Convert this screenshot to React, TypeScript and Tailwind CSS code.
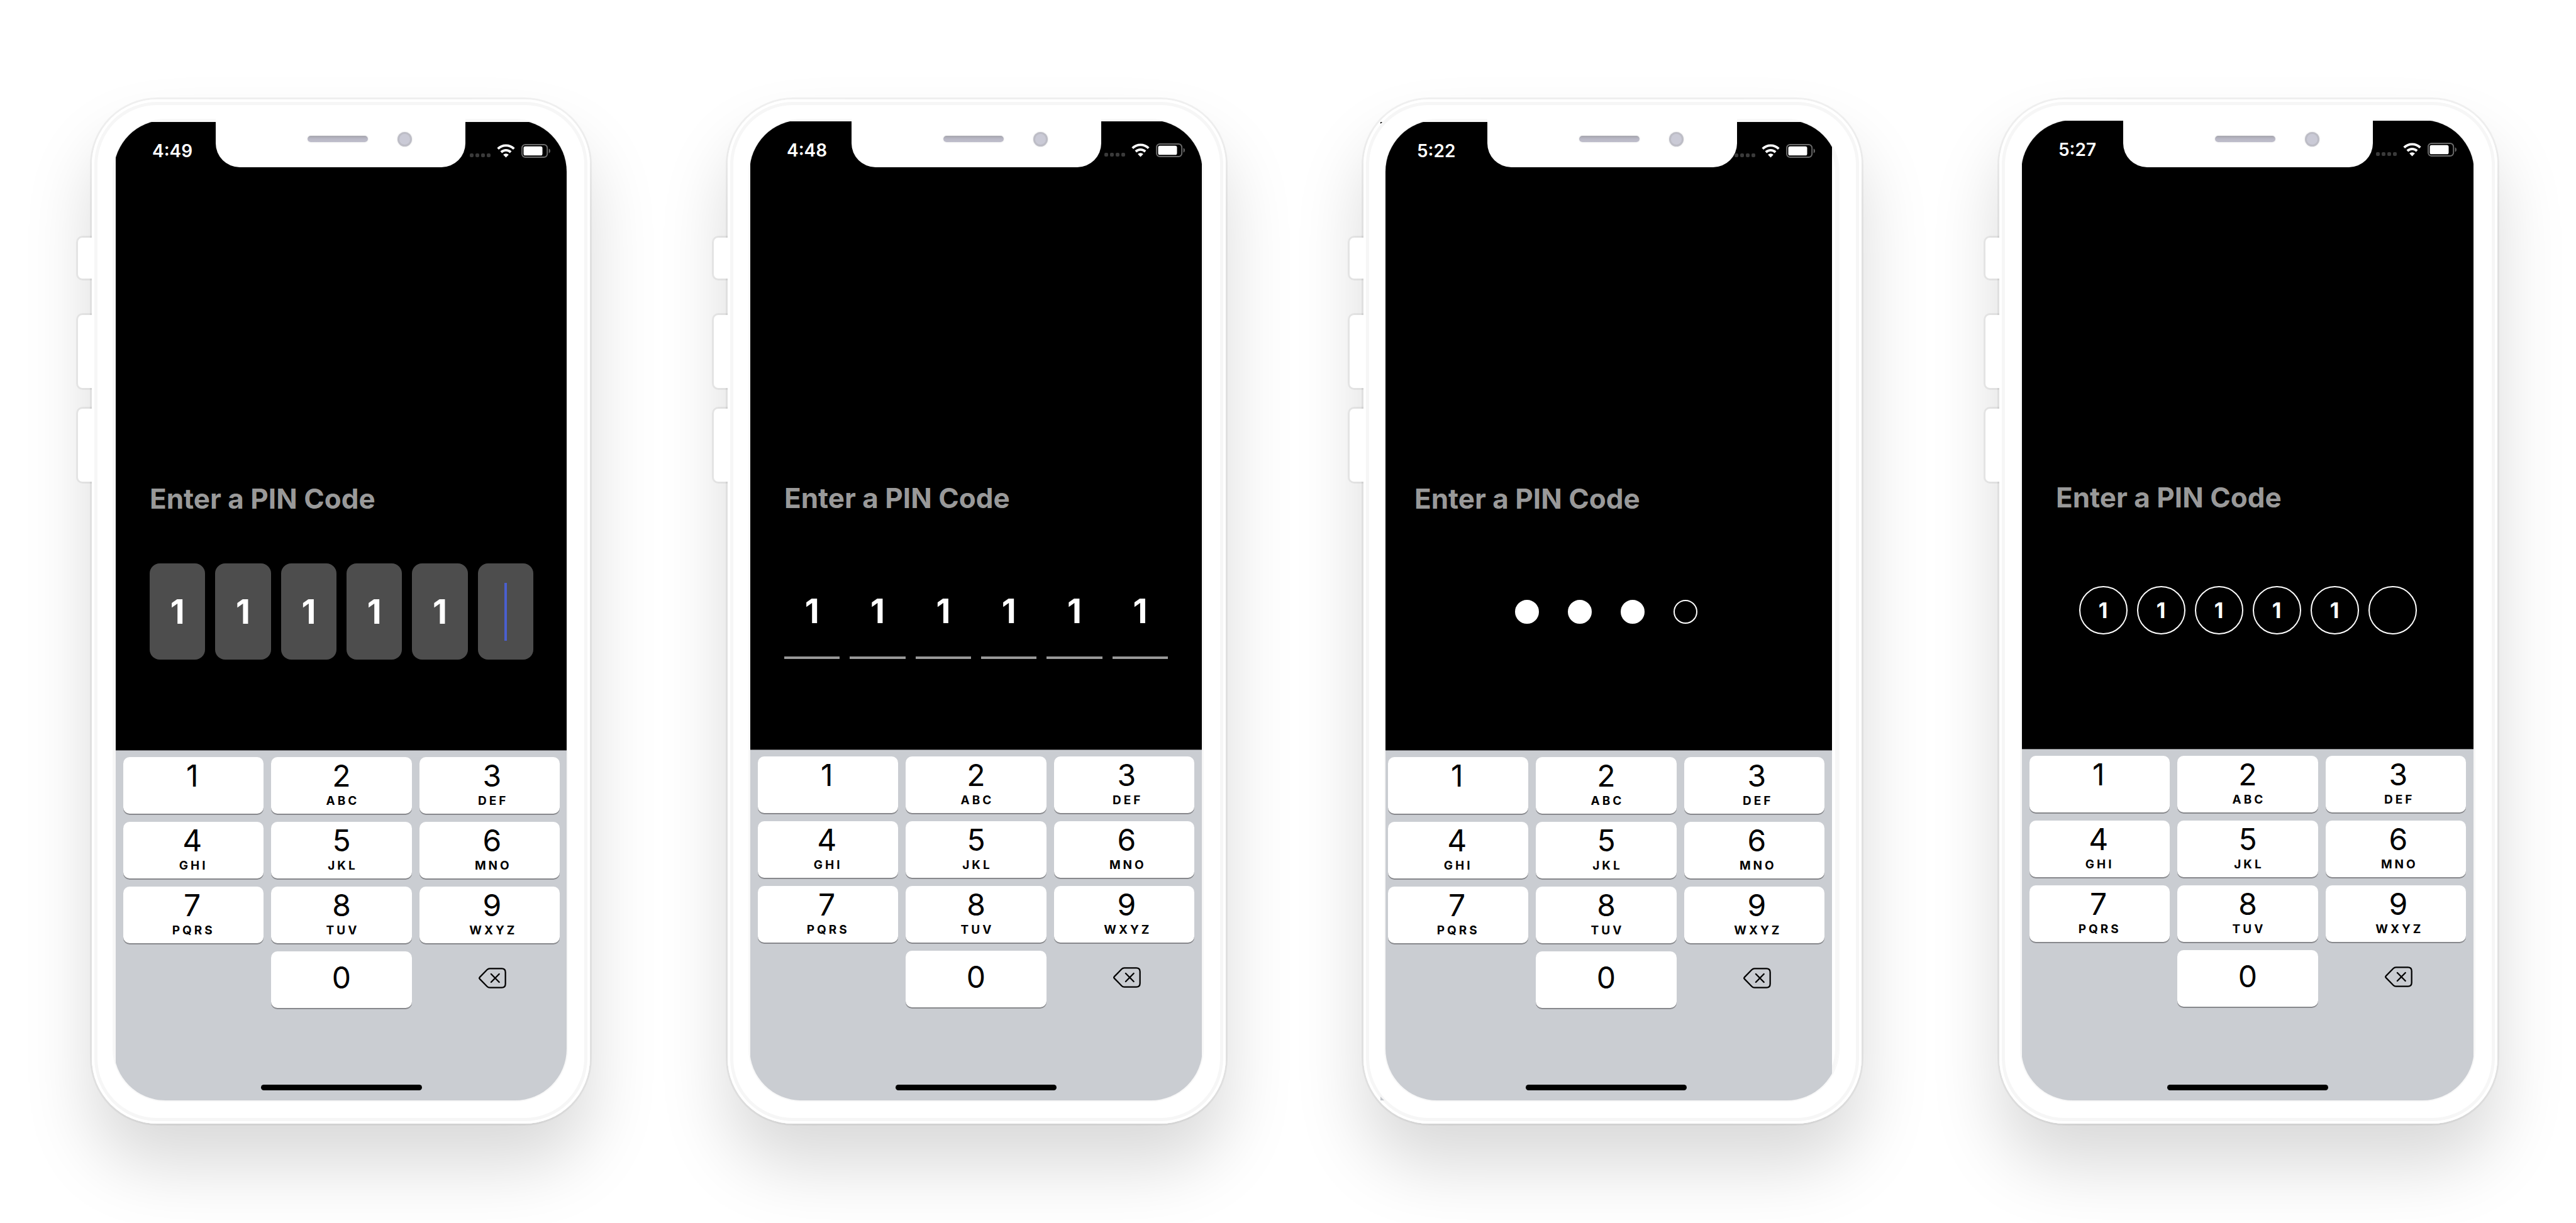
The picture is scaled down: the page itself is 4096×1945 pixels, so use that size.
import React from "react";
import clsx from "clsx";

type Variant = "boxes" | "lines" | "dots" | "circles";

interface PhoneSpec {
  time: string;
  variant: Variant;
  pin: string;
  length: number;
  screen: string;
}

const phones: PhoneSpec[] = [
  { time: "4:49", variant: "boxes", pin: "11111", length: 6, screen: "mt-[3px] ml-[3px] -mr-px" },
  { time: "4:48", variant: "lines", pin: "111111", length: 6, screen: "mt-[2px] mx-px" },
  { time: "5:22", variant: "dots", pin: "111", length: 4, screen: "mt-[3px] -ml-2 mr-[10px]" },
  { time: "5:27", variant: "circles", pin: "11111", length: 6, screen: "mt-px mx-px" },
];

const keys: [string, string][] = [
  ["1", ""],
  ["2", "ABC"],
  ["3", "DEF"],
  ["4", "GHI"],
  ["5", "JKL"],
  ["6", "MNO"],
  ["7", "PQRS"],
  ["8", "TUV"],
  ["9", "WXYZ"],
];

// Outer columns lean slightly towards the edges of the keypad.
const columnPadding = ["pr-1", "", "pl-2"];

function WifiIcon() {
  return (
    <svg viewBox="0 0 30 23" className="h-[22px] w-[29px]" aria-label="Wi-Fi">
      <g fill="none" stroke="#fff" strokeWidth="4">
        <path d="M1.6 8A19.2 19.2 0 0 1 28.4 8" />
        <path d="M7 13.6A11.6 11.6 0 0 1 23 13.6" />
      </g>
      <path d="M15 22.6l-4.6-4.7a6.6 6.6 0 0 1 9.2 0z" fill="#fff" />
    </svg>
  );
}

function BatteryIcon() {
  return (
    <svg viewBox="0 0 48 23" className="h-[22px] w-[46px]" aria-label="Battery">
      <rect x="1" y="1" width="42" height="21" rx="5.5" fill="none" stroke="#6b6b6b" strokeWidth="2" />
      <rect x="3.6" y="3.8" width="31.4" height="15.4" rx="3" fill="#fff" />
      <path d="M45.6 7.6c1.6.7 2.4 2.2 2.4 3.9s-.8 3.2-2.4 3.9z" fill="#6b6b6b" />
    </svg>
  );
}

function BackspaceIcon() {
  return (
    <svg viewBox="0 0 46 34" className="h-[33px] w-[44px]" fill="none" stroke="#000" strokeWidth="2.4" strokeLinejoin="round" strokeLinecap="round">
      <path d="M1.9 15.6L14 3.2Q16 1.2 18.6 1.2H38.5Q44.6 1.2 44.6 7.3V26.7Q44.6 32.8 38.5 32.8H18.6Q16 32.8 14 30.8L1.9 18.4Q.6 17 1.9 15.6Z" />
      <path d="M20.8 10.2L34.2 23.8M34.2 10.2L20.8 23.8" />
    </svg>
  );
}

function StatusBar({ time }: { time: string }) {
  return (
    <header className="flex h-[91px] items-center justify-between pr-[27px] pl-[58px]">
      <span className="text-[28px] leading-9 font-semibold text-white">{time}</span>
      <div className="flex items-center gap-[10px]">
        <div className="flex gap-[3px] pt-[15px]">
          {[0, 1, 2, 3].map((i) => (
            <span key={i} className="size-[6px] rounded-[2px] bg-[#3a3a3a]" />
          ))}
        </div>
        <WifiIcon />
        <BatteryIcon />
      </div>
    </header>
  );
}

const cellStyles: Record<Exclude<Variant, "dots">, string> = {
  boxes: "h-[153px] w-full rounded-2xl bg-[#4d4d4d] text-[53px]",
  lines: "h-[153px] w-full border-y-4 border-t-transparent border-b-[#999] text-[53px]",
  circles: "size-[77px] rounded-full border-2 border-white text-[34px]",
};

function PinCells({ variant, pin, length }: { variant: Variant; pin: string; length: number }) {
  const cells = Array.from({ length }, (_, i) => pin[i] ?? "");
  if (variant === "dots") {
    return (
      <div className="flex h-[153px] items-center justify-center gap-[46px]" role="img" aria-label="3 of 4 digits entered">
        {cells.map((c, i) => (
          <span key={i} className={clsx("size-[38px] rounded-full border-2 border-white", c && "bg-white")} />
        ))}
      </div>
    );
  }
  return (
    <div
      className={
        variant === "circles"
          ? "flex h-[153px] items-center justify-center gap-[15px]"
          : "grid h-[153px] grid-cols-6 gap-4 px-[54px]"
      }
    >
      {cells.map((c, i) => (
        <div key={i} className="relative">
          <input
            aria-label={`Digit ${i + 1}`}
            defaultValue={c}
            maxLength={1}
            inputMode="numeric"
            className={clsx("block p-0 text-center font-bold text-white outline-none", cellStyles[variant])}
          />
          {variant === "boxes" && i === pin.length && (
            <span className="absolute inset-0 m-auto h-[92px] w-1 bg-[#4a5fcf]" />
          )}
        </div>
      ))}
    </div>
  );
}

function Keyboard() {
  const key = "flex h-[90px] flex-col items-center rounded-[10px] bg-white shadow-[0_2px_0_#87888c]";
  return (
    <div className="flex flex-1 flex-col border-t border-[#808185] bg-[#cacdd2]">
      <div className="mb-[122px] grid grid-cols-3 gap-x-3 gap-y-[13px] px-3 pt-[10px] text-black">
        {keys.map(([digit, letters], i) => (
          <button key={digit} className={clsx(key, "pt-[10px]", columnPadding[i % 3])}>
            <span className="text-[48px] leading-10">{digit}</span>
            {letters && <span className="mt-2 pl-1 text-[19px] leading-6 font-bold tracking-[4px]">{letters}</span>}
          </button>
        ))}
        <button className={clsx(key, "col-start-2 justify-center pb-[6px]")}>
          <span className="text-[48px] leading-10">0</span>
        </button>
        <button aria-label="Delete" className="flex items-center justify-center pb-[6px] pl-[10px]">
          <BackspaceIcon />
        </button>
      </div>
      <div className="mx-auto mt-auto mb-4 h-[9px] w-64 rounded-full bg-black" />
    </div>
  );
}

function Phone({ time, variant, pin, length, screen }: PhoneSpec) {
  const side = "w-[25px] rounded-l-[10px] border-[3px] border-r-0 border-black/6 bg-white bg-clip-padding";
  return (
    <section className="relative flex min-w-0 flex-1 flex-col rounded-[104px] bg-white pt-[33px] pr-[37px] pb-[37px] pl-[35px] shadow-[inset_0_0_0_4px_#fff,inset_0_0_0_9px_#f6f6f6,0_0_0_3px_rgba(0,0,0,0.05),0_67px_110px_rgba(0,0,0,0.15)]">
      <div className="absolute top-[217px] right-full flex flex-col">
        <span className={clsx(side, "h-[71px]")} />
        <span className={clsx(side, "mt-[52px] h-[122px]")} />
        <span className={clsx(side, "mt-[27px] h-[122px]")} />
      </div>
      {variant === "dots" && (
        <>
          <svg viewBox="0 0 3 3" className="absolute top-[36px] left-[27px] size-[3px]">
            <path d="M0 0h3L0 3z" />
          </svg>
          <svg viewBox="0 0 6 6" className="absolute bottom-[37px] left-[27px] size-[6px]">
            <path d="M0 0L6 6H0z" fill="#c3c6cb" />
          </svg>
        </>
      )}
      <div className="relative flex flex-1 flex-col">
        <div className="flex flex-1 flex-col overflow-hidden rounded-[82px] bg-white shadow-[0_0_0_2px_#f8f8f8,inset_0_0_0_5px_#f7f7f7]">
          <div className={clsx("flex flex-1 flex-col", screen)}>
            <div className="bg-black pb-36">
              <StatusBar time={time} />
              <h1 className="mt-[480px] mb-[75px] px-[54px] text-[44px] leading-[56px] font-bold text-[#999]">Enter a PIN Code</h1>
              <PinCells variant={variant} pin={pin} length={length} />
            </div>
            <Keyboard />
          </div>
        </div>
        <div className="absolute inset-x-0 -top-[6px] mx-auto h-[81px] w-[397px] rounded-b-[38px] bg-white">
          <div className="flex h-[72px] items-center gap-[47px] pl-[146px]">
            <span className="h-[10px] w-24 rounded-full bg-gradient-to-b from-[#a5a5ad] via-[#b9b8c6] to-[#bfbecb] shadow-[0_0_3px_rgba(0,0,0,0.12)]" />
            <span className="flex size-[23px] items-center justify-center rounded-full bg-[#bdbdc6] shadow-[0_0_3px_rgba(0,0,0,0.12)]">
              <span className="size-[17px] rounded-full bg-[#cacad6]" />
            </span>
          </div>
        </div>
      </div>
    </section>
  );
}

export default function App() {
  return (
    <main className="flex gap-[219px] overflow-hidden bg-white pt-[158px] pr-[125px] pb-[158px] pl-[146px] font-['Inter',sans-serif]">
      {phones.map((p) => (
        <Phone key={p.time} {...p} />
      ))}
    </main>
  );
}
